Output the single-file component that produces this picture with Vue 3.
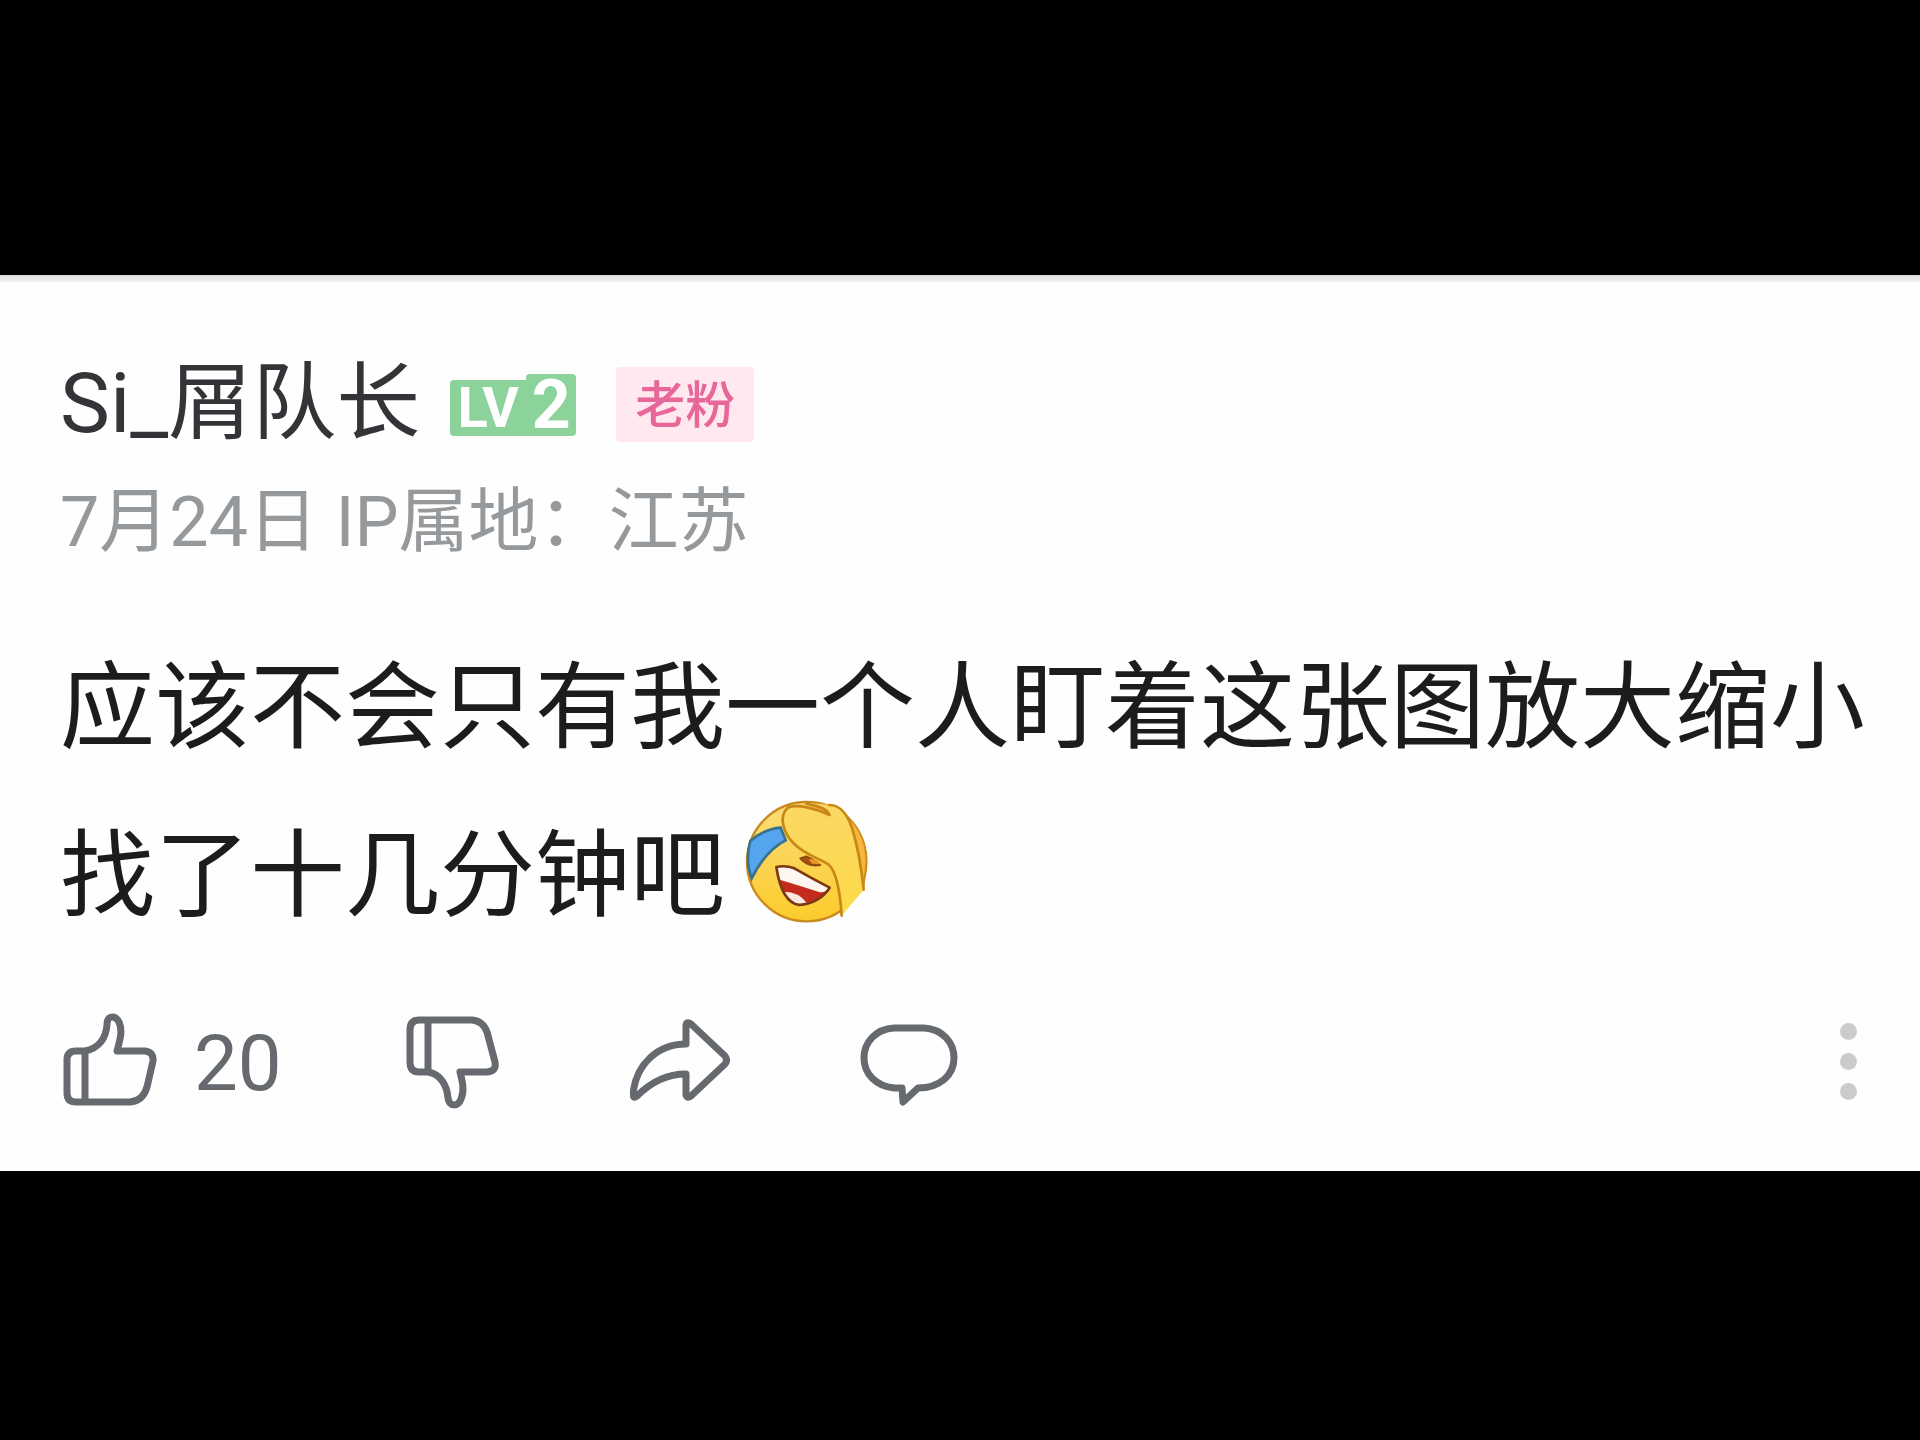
<template>
  <main class="viewer">
    <article class="comment">
      <header class="user">
        <span class="name">{{ comment.name }}</span>
        <span class="level">
          <span class="level-label">LV</span>
          <span class="level-number">{{ comment.level }}</span>
        </span>
        <span class="fan-tag">{{ comment.tag }}</span>
      </header>

      <p class="meta">{{ comment.date }} IP属地：{{ comment.location }}</p>

      <p class="content">
        {{ comment.text }}<svg class="emoji" viewBox="72 54 384 384" role="img" aria-label="笑哭">
          <defs>
            <linearGradient id="face" x1="0" y1="0" x2="0" y2="1">
              <stop offset="0" stop-color="#fbdc78" />
              <stop offset="1" stop-color="#fccb2c" />
            </linearGradient>
            <linearGradient id="hand" x1="0" y1="0" x2="0" y2="1">
              <stop offset="0" stop-color="#fbd765" />
              <stop offset="1" stop-color="#fddb46" />
            </linearGradient>
          </defs>
          <circle cx="263" cy="248" r="179" fill="url(#face)" stroke="#c98a20" stroke-width="7" />
          <path d="M385 112C425 150 443 200 442 250L433 330Z" fill="#f5b83c" stroke="#d08c1c" stroke-width="5" />
          <path d="M94 186Q135 150 185 146L200 184Q140 214 98 298Q78 245 94 186Z" fill="#55a5ee" stroke="#39718f" stroke-width="8" />
          <path
            d="M330 78C362 78 386 108 400 150C420 215 428 275 434 332L368 410C364 350 356 280 328 256C300 238 260 228 226 195C192 162 178 112 206 86C235 74 262 70 330 78Z"
            fill="url(#hand)"
          />
          <path d="M262 74C290 74 320 86 332 108C305 94 285 88 262 74Z" fill="#f3b53a" />
          <path
            d="M368 410C364 350 356 280 328 256C300 238 260 228 226 195C192 162 178 112 206 86C235 74 290 88 332 108C322 88 298 82 262 74M330 78C362 76 386 108 400 150C420 215 428 275 434 332"
            fill="none"
            stroke="#c98716"
            stroke-width="8"
            stroke-linecap="round"
            stroke-linejoin="round"
          />
          <path d="M244 238Q266 264 304 258Q286 242 262 232Z" fill="#a4500f" stroke="#8f4a10" stroke-width="6" stroke-linejoin="round" />
          <path d="M270 240Q290 238 306 256L278 254Z" fill="#e9962a" />
          <path d="M172 264Q200 258 226 268Q282 300 332 326Q302 372 240 378Q188 370 172 264Z" fill="#c52b1c" />
          <path d="M172 264Q200 258 226 268Q282 300 332 326Q316 344 298 338Q236 318 182 302Z" fill="#fff6f0" />
          <path d="M196 338Q238 338 264 372Q220 386 196 338Z" fill="#fbe9e2" />
          <path d="M172 264Q200 258 226 268Q282 300 332 326Q302 372 240 378Q188 370 172 264Z" fill="none" stroke="#7b3a14" stroke-width="8" stroke-linejoin="round" />
        </svg>
      </p>

      <footer class="actions">
        <button
          v-for="action in actions"
          :key="action.label"
          class="action"
          type="button"
          :aria-label="action.label"
        >
          <svg class="icon" viewBox="0 0 100 100">
            <path :d="action.path" />
          </svg>
          <span v-if="action.count" class="count">{{ action.count }}</span>
        </button>
        <button class="more" type="button" aria-label="更多">
          <i v-for="n in 3" :key="n" class="dot"></i>
        </button>
      </footer>
    </article>
  </main>
</template>

<script setup>
const comment = {
  name: 'Si_屑队长',
  level: 2,
  tag: '老粉',
  date: '7月24日',
  location: '江苏',
  text: '应该不会只有我一个人盯着这张图放大缩小找了十几分钟吧'
};

const actions = [
  {
    label: '点赞',
    count: 20,
    path: 'M25 39V90M25 39C40 36 46 25 47 13C47 3 55 3 59 10C63 19 60 28 57 39H85Q94 40 93 49L87 75Q83 89 70 90H16Q7 90 7 81V48Q7 39 16 39Z'
  },
  {
    label: '点踩',
    path: 'M28 8V60M28 60C41 62 47 74 48 86C49 95 58 95 61 87C65 78 62 68 60 60H87Q97 59 95 50L87 20Q83 9 72 8H19Q10 8 10 18V50Q10 60 19 60Z'
  },
  {
    label: '分享',
    path: 'M56 32V13Q57 9 61 12L95 44Q98 48 95 52L61 84Q57 87 56 83V62Q29 62 7 84Q3 87 3 82C6 52 28 32 56 32Z'
  },
  {
    label: '评论',
    path: 'M34 16H64C82 17 94 30 94 46C94 63 80 76 58 76L43 90L42 76H34C16 74 4 62 4 46C4 30 16 17 34 16Z'
  }
];
</script>

<style>
body {
  margin: 0;
  background: #000;
}
</style>

<style scoped>
.viewer {
  min-height: 100vh;
  display: flex;
  flex-direction: column;
  justify-content: center;
  background: #000;
  font-family: Roboto, "Noto Sans CJK SC", sans-serif;
}

.comment {
  margin-top: 5px;
  padding: 77px 50px 49px 60px;
  background: linear-gradient(#dedbdc, #e9e7e8 4px, #fefefe 8px);
}

.user {
  display: flex;
  align-items: center;
  height: 100px;
}

.name {
  padding-top: 4px;
  font-size: 84px;
  line-height: 96px;
  color: #323437;
}

.level {
  display: flex;
  align-items: flex-end;
  margin: 6px 40px 0 30px;
  color: #fff;
  font-weight: 700;
}

.level-label,
.level-number {
  background: #8bd29b;
  text-align: center;
}

.level-label {
  width: 76px;
  border-radius: 4px 0 0 4px;
  font-size: 56px;
  line-height: 56px;
}

.level-number {
  width: 50px;
  border-radius: 4px 4px 4px 0;
  font-size: 68px;
  line-height: 62px;
}

.fan-tag {
  margin-top: 6px;
  padding: 4px 19px 0;
  border-radius: 4px;
  background: #ffe9ee;
  color: #e8679a;
  font-size: 50px;
  font-weight: 500;
  line-height: 71px;
}

.meta {
  margin: 28px 0 0;
  font-size: 70px;
  line-height: 84px;
  color: #96999c;
}

.content {
  margin: 61px 0 0;
  font-size: 95px;
  line-height: 168px;
  color: #1b1c1e;
}

.emoji {
  width: 128px;
  height: 128px;
  margin-left: 18px;
  vertical-align: -16px;
}

.actions {
  display: grid;
  grid-template-columns: 340px 230px 230px 1fr auto;
  align-items: center;
  margin-top: 41px;
  height: 120px;
}

.action,
.more {
  padding: 0;
  border: 0;
  background: none;
  font-family: inherit;
  color: #666a6e;
  cursor: pointer;
}

.action {
  display: flex;
  align-items: center;
  gap: 34px;
}

.icon {
  width: 100px;
  height: 100px;
  fill: none;
  stroke: currentColor;
  stroke-width: 7;
  stroke-linejoin: round;
}

.count {
  padding-top: 4px;
  font-size: 78px;
  line-height: 96px;
}

.more {
  display: flex;
  flex-direction: column;
  align-items: center;
  gap: 13px;
  width: 24px;
  margin-right: 10px;
}

.dot {
  width: 17px;
  height: 17px;
  border-radius: 50%;
  background: #cbcbcb;
}
</style>
